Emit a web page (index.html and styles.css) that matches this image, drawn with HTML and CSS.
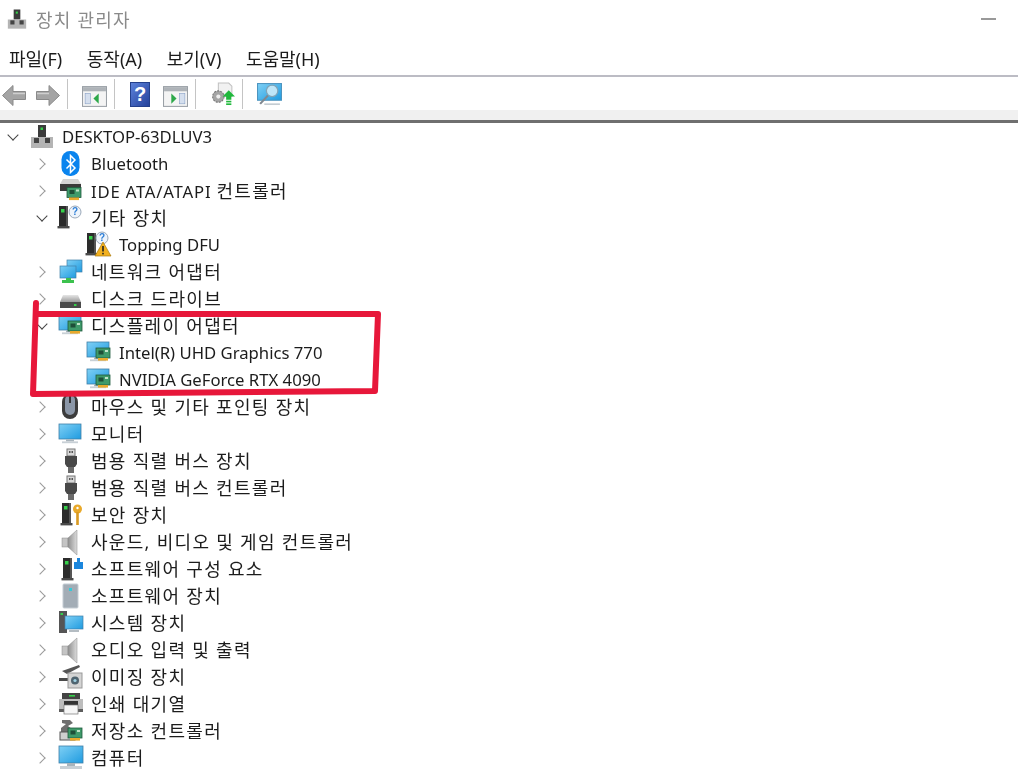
FILE: index.html
```html
<!DOCTYPE html>
<html lang="ko">
<head>
<meta charset="utf-8">
<title>장치 관리자</title>
<link rel="stylesheet" href="styles.css">
</head>
<body>
<svg class="defs" width="0" height="0" aria-hidden="true">
  <defs>
    <linearGradient id="scr" x1="0" y1="0" x2="1" y2="1"><stop offset="0" stop-color="#7fd0f5"/><stop offset="1" stop-color="#1f9be0"/></linearGradient>
    <linearGradient id="metal" x1="0" y1="0" x2="0" y2="1"><stop offset="0" stop-color="#e6e6e6"/><stop offset="1" stop-color="#9a9a9a"/></linearGradient>
    <linearGradient id="cone" x1="0" y1="0" x2="1" y2="0"><stop offset="0" stop-color="#8f8f8f"/><stop offset="1" stop-color="#dcdcdc"/></linearGradient>
    <linearGradient id="help" x1="0" y1="0" x2="1" y2="1"><stop offset="0" stop-color="#5d83dc"/><stop offset="1" stop-color="#23409a"/></linearGradient>
    <g id="pcb"><rect x="0" y="0" width="14" height="10" fill="#3f9a6a" stroke="#1f5a3c" stroke-width=".8"/><rect x="2.5" y="2.5" width="5" height="4" fill="#1e4f38"/><rect x="9" y="2" width="3" height="2" fill="#bfe3c8"/><rect x="2" y="10" width="10" height="2.6" fill="#e8a92c"/></g>
    <g id="tower"><rect x="0" y="0" width="9" height="20" fill="#2c2c2c"/><rect x="7" y="0" width="2" height="20" fill="#555"/><rect x="2" y="3" width="3.5" height="3.5" fill="#35d04a"/><rect x="-1.5" y="20" width="12" height="2.4" fill="#4a4a4a"/></g>
    <g id="bubble"><circle cx="0" cy="0" r="6" fill="#eef4fb" stroke="#9aa8b8"/><text x="0" y="3.4" class="q">?</text></g>
    <g id="mon"><rect x="0" y="0" width="22" height="15" fill="url(#scr)" stroke="#3f7fa8" stroke-width=".8"/><rect x="7" y="15.4" width="8" height="2" fill="#a8b4bc"/><rect x="3" y="17.4" width="16" height="1.8" fill="#c8d0d6"/></g>
    <g id="spk"><rect x="1" y="8" width="6" height="9" fill="#c4c4c4" stroke="#8a8a8a" stroke-width=".5"/><path d="M7 8 16 0v25l-9-8z" fill="url(#cone)" stroke="#888" stroke-width=".5"/></g>
    <g id="plug"><rect x="8" y="0" width="8" height="7" fill="#d8d8d8" stroke="#777"/><rect x="10" y="2" width="1.5" height="2" fill="#555"/><rect x="12.5" y="2" width="1.5" height="2" fill="#555"/><path d="M6 7h12v8l-2 3H8l-2-3z" fill="#484848"/><rect x="9" y="18" width="6" height="6" fill="#6a6a6a"/></g>
    <g id="disp"><use href="#mon" transform="translate(0 1)"/><use href="#pcb" transform="translate(9 7)"/></g>
  </defs>
</svg>

<div class="app">
  <header class="title-bar">
    <svg class="title-ic" viewBox="0 0 24 24"><rect x="8" y="0" width="8" height="12" fill="#3b3b3b"/><rect x="10.5" y="2.5" width="2.5" height="2.5" fill="#35d04a"/><path d="M1 12h22v11H1z" fill="#b4b4b4"/><rect x="4" y="13" width="5" height="5" fill="#444"/><rect x="15" y="13" width="5" height="5" fill="#444"/></svg>
    <span class="title-text">장치 관리자</span>
    <span class="minimize"></span>
  </header>

  <nav class="menu-bar">
    <span>파일(F)</span><span>동작(A)</span><span>보기(V)</span><span>도움말(H)</span>
  </nav>

  <div class="toolbar">
    <div class="tb-group tb-first">
      <svg class="tb-ic tb-arrow" viewBox="0 0 24 24"><path d="M.5 12 11 2v6h12.500v8H11v6z" fill="#a4a4a4" stroke="#8a8a8a"/><path d="M11 10h12" stroke="#cfcfcf" stroke-width="1.500"/></svg>
      <svg class="tb-ic tb-arrow" viewBox="0 0 24 24"><path d="M23.500 12 13 2v6H.5v8H13v6z" fill="#a4a4a4" stroke="#8a8a8a"/><path d="M1 10h12" stroke="#cfcfcf" stroke-width="1.500"/></svg>
    </div>
    <div class="tb-group">
      <svg class="tb-ic tb-low" viewBox="0 0 24 24"><rect x=".5" y="2.500" width="23" height="19" fill="#f4f4f4" stroke="#9aa0a6"/><rect x="1" y="3" width="22" height="4" fill="#aeb3b8"/><rect x="3" y="9" width="5" height="10" fill="#d5dfee" stroke="#8ba3c7" stroke-width=".6"/><path d="M16 9v10l-5-5z" fill="#2ea84a"/></svg>
    </div>
    <div class="tb-group tb-wide">
      <svg class="tb-help" viewBox="0 0 20 25"><rect x=".5" y=".5" width="19" height="24" fill="url(#help)" stroke="#24408c"/><text x="10" y="19" class="help-q">?</text></svg>
      <svg class="tb-ic tb-low" viewBox="0 0 24 24"><rect x=".5" y="2.500" width="23" height="19" fill="#f4f4f4" stroke="#9aa0a6"/><rect x="1" y="3" width="22" height="4" fill="#aeb3b8"/><rect x="16" y="9" width="5" height="10" fill="#d5dfee" stroke="#8ba3c7" stroke-width=".6"/><path d="M8 9v10l5-5z" fill="#2ea84a"/></svg>
    </div>
    <div class="tb-group">
      <svg class="tb-ic" viewBox="0 0 24 24"><path d="M8 1h10l3 3v10H8z" fill="#f1f1f1" stroke="#c2c2c2"/><circle cx="8" cy="14" r="5.500" fill="#a5a5a5" stroke="#777" stroke-dasharray="2 1"/><circle cx="8" cy="14" r="2" fill="#eee"/><path d="M18 8l6 6h-3.500v3h-5v-3H12z" fill="#20b83c"/><rect x="15.500" y="18" width="5" height="1.600" fill="#20b83c"/><rect x="15.500" y="20.500" width="5" height="1.600" fill="#20b83c"/></svg>
    </div>
    <div class="tb-group tb-last">
      <svg class="tb-ic" viewBox="0 0 24 24"><rect x=".5" y="1.500" width="23" height="16" fill="url(#scr)" stroke="#4d94bf"/><rect x="7" y="20.500" width="15" height="1.600" fill="#c4ccd2"/><circle cx="14.500" cy="8.500" r="5.500" fill="#bfe6f8" stroke="#7fa4b8" stroke-width="1.200"/><path d="M10.500 13 3 21" stroke="#808890" stroke-width="2"/></svg>
    </div>
  </div>
  <div class="strip"></div>

  <main class="tree">
    <div class="row d0"><span class="tw down"></span>
      <svg class="ic" viewBox="0 0 24 24"><rect x="8" y="0" width="8" height="12" fill="#3b3b3b"/><rect x="10.500" y="2.500" width="2.500" height="2.500" fill="#35d04a"/><path d="M1 12h22v11H1z" fill="#b4b4b4"/><rect x="4" y="13" width="5" height="5" fill="#444"/><rect x="15" y="13" width="5" height="5" fill="#444"/></svg>
      <span class="label">DESKTOP-63DLUV3</span></div>
    <div class="row d1"><span class="tw"></span>
      <svg class="ic" viewBox="0 0 24 24"><rect x="2.500" y="-1" width="18" height="25" rx="8.500" fill="#0a84ee"/><path d="M7.500 7.500 16 16l-4.500 4.500V3.500L16 8l-8.500 8.500" fill="none" stroke="#fff" stroke-width="1.500"/></svg>
      <span class="label">Bluetooth</span></div>
    <div class="row d1"><span class="tw"></span>
      <svg class="ic" viewBox="0 0 24 24"><path d="M4 0h15l3 5H1z" fill="#d4d4d4"/><rect x="1" y="5" width="21" height="7" fill="#3a3a3a"/><use href="#pcb" transform="translate(8 8.500)"/></svg>
      <span class="label label-wide">IDE ATA/ATAPI <span class="ko">컨트롤러</span></span></div>
    <div class="row d1"><span class="tw down"></span>
      <svg class="ic" viewBox="0 0 24 24"><use href="#tower"/><use href="#bubble" transform="translate(16 6)"/></svg>
      <span class="label ko">기타 장치</span></div>
    <div class="row d2"><span class="tw none"></span>
      <svg class="ic" viewBox="0 0 24 24"><use href="#tower"/><use href="#bubble" transform="translate(15 5)"/><path d="M16 9 24 23H8z" fill="#f2b01e" stroke="#a97a10" stroke-width=".7"/><rect x="15.200" y="13" width="1.600" height="5.500" fill="#222"/><rect x="15.200" y="19.800" width="1.600" height="1.600" fill="#222"/></svg>
      <span class="label">Topping DFU</span></div>
    <div class="row d1"><span class="tw"></span>
      <svg class="ic" viewBox="0 0 24 24"><rect x="8" y="0" width="15" height="12" fill="url(#scr)" stroke="#3f7fa8" stroke-width=".7"/><rect x="1" y="6" width="16" height="12" fill="url(#scr)" stroke="#3f7fa8" stroke-width=".7"/><path d="M7 18h5v2h3v3H3v-3h4z" fill="#3cc24e"/></svg>
      <span class="label ko">네트워크 어댑터</span></div>
    <div class="row d1"><span class="tw"></span>
      <svg class="ic" viewBox="0 0 24 24"><path d="M4 8h15l3 7H1z" fill="url(#metal)"/><rect x="1" y="15" width="21" height="6" fill="#4a4a4a"/><rect x="15" y="17" width="2.500" height="2" fill="#35d04a"/></svg>
      <span class="label ko">디스크 드라이브</span></div>
    <div class="row d1"><span class="tw down"></span><svg class="ic" viewBox="0 0 24 24"><use href="#disp"/></svg><span class="label ko">디스플레이 어댑터</span></div>
    <div class="row d2"><span class="tw none"></span><svg class="ic" viewBox="0 0 24 24"><use href="#disp"/></svg><span class="label">Intel(R) UHD Graphics 770</span></div>
    <div class="row d2"><span class="tw none"></span><svg class="ic" viewBox="0 0 24 24"><use href="#disp"/></svg><span class="label">NVIDIA GeForce RTX 4090</span></div>
    <div class="row d1"><span class="tw"></span>
      <svg class="ic" viewBox="0 0 24 24"><rect x="3" y="-1" width="16" height="25" rx="8" fill="#3c3c3c"/><rect x="6" y="0" width="10" height="20" rx="5" fill="#8b97a8"/><rect x="10" y="0" width="2" height="8" fill="#333"/></svg>
      <span class="label ko">마우스 및 기타 포인팅 장치</span></div>
    <div class="row d1"><span class="tw"></span><svg class="ic" viewBox="0 0 24 24"><use href="#mon" transform="translate(0 2)"/></svg><span class="label ko">모니터</span></div>
    <div class="row d1"><span class="tw"></span><svg class="ic" viewBox="0 0 24 24"><use href="#plug"/></svg><span class="label ko">범용 직렬 버스 장치</span></div>
    <div class="row d1"><span class="tw"></span><svg class="ic" viewBox="0 0 24 24"><use href="#plug"/></svg><span class="label ko">범용 직렬 버스 컨트롤러</span></div>
    <div class="row d1"><span class="tw"></span>
      <svg class="ic" viewBox="0 0 24 24"><use href="#tower" transform="translate(3 0)"/><circle cx="18.500" cy="6" r="4.500" fill="#e9a92a"/><rect x="17.200" y="9" width="2.600" height="13" fill="#d99a22"/><circle cx="18.500" cy="5" r="1.200" fill="#fff"/></svg>
      <span class="label ko">보안 장치</span></div>
    <div class="row d1"><span class="tw"></span><svg class="ic" viewBox="0 0 24 24"><use href="#spk" transform="translate(2 0)"/></svg><span class="label ko">사운드, 비디오 및 게임 컨트롤러</span></div>
    <div class="row d1"><span class="tw"></span>
      <svg class="ic" viewBox="0 0 24 24"><use href="#tower" transform="translate(4 1)"/><path d="M15 5h3V1h3v4h3v7h-9z" fill="#1b86dd"/></svg>
      <span class="label ko">소프트웨어 구성 요소</span></div>
    <div class="row d1"><span class="tw"></span>
      <svg class="ic" viewBox="0 0 24 24"><rect x="4" y="0" width="15" height="24" rx="1" fill="#a3adb6" stroke="#c5cdd4"/><rect x="10" y="4" width="3" height="3" fill="#36c9d8"/></svg>
      <span class="label ko">소프트웨어 장치</span></div>
    <div class="row d1"><span class="tw"></span>
      <svg class="ic" viewBox="0 0 24 24"><rect x="0" y="0" width="8" height="22" fill="#555"/><rect x="1.500" y="2" width="2.500" height="2" fill="#35d04a"/><rect x="6" y="5" width="18" height="13" fill="url(#scr)" stroke="#3f7fa8" stroke-width=".7"/><rect x="10" y="19" width="10" height="2" fill="#b4bcc2"/></svg>
      <span class="label ko">시스템 장치</span></div>
    <div class="row d1"><span class="tw"></span><svg class="ic" viewBox="0 0 24 24"><use href="#spk" transform="translate(2 0)"/></svg><span class="label ko">오디오 입력 및 출력</span></div>
    <div class="row d1"><span class="tw"></span>
      <svg class="ic" viewBox="0 0 24 24"><path d="M3 6 20 0l1 2L8 9z" fill="#555"/><rect x="0" y="13" width="9" height="3" fill="#4a4a4a"/><rect x="9" y="8" width="14" height="15" fill="#d4d4d4" stroke="#999"/><circle cx="16" cy="15.500" r="4" fill="#4f6470"/><circle cx="16" cy="15.500" r="1.600" fill="#9ed0e2"/></svg>
      <span class="label ko">이미징 장치</span></div>
    <div class="row d1"><span class="tw"></span>
      <svg class="ic" viewBox="0 0 24 24"><path d="M3 1h18v6H3z" fill="#444"/><rect x="10" y="3" width="6" height="1.600" fill="#35d04a"/><rect x="0" y="7" width="24" height="10" fill="#bdbdbd"/><rect x="5" y="9" width="14" height="4" fill="#333"/><rect x="0" y="17" width="24" height="3" fill="#5d5d5d"/><rect x="5" y="13" width="14" height="9" fill="#f6f6f6" stroke="#777" stroke-width=".7"/></svg>
      <span class="label ko">인쇄 대기열</span></div>
    <div class="row d1"><span class="tw"></span>
      <svg class="ic" viewBox="0 0 24 24"><path d="M3 1h8l3 3-5 3 4 3v3H2V9l5-4-4-1z" fill="#6f6f6f"/><rect x="1" y="13" width="15" height="8" fill="#cfcfcf" stroke="#555"/><use href="#pcb" transform="translate(9 9)"/></svg>
      <span class="label ko">저장소 컨트롤러</span></div>
    <div class="row d1"><span class="tw"></span>
      <svg class="ic" viewBox="0 0 24 24"><rect x="0" y="0" width="24" height="17" fill="url(#scr)" stroke="#3f7fa8" stroke-width=".8"/><rect x="8" y="17" width="8" height="3" fill="#a8b4bc"/><rect x="1" y="20" width="22" height="3" fill="#c8d0d6"/></svg>
      <span class="label ko">컴퓨터</span></div>

    <svg class="mark" viewBox="0 0 1018 774"><path d="M36 303 33 394 375 391 378 314 36 314" fill="none" stroke="#e7173a" stroke-width="6" stroke-linejoin="round" stroke-linecap="round"/></svg>
  </main>
</div>
</body>
</html>
```

FILE: styles.css
```css
* { box-sizing: border-box; }
html, body { margin: 0; padding: 0; }
body {
  width: 1018px;
  height: 774px;
  overflow: hidden;
  background: #fff;
  color: #1c1c1c;
  font-family: "Noto Sans", "Noto Sans CJK KR", sans-serif;
  font-size: 16.7px;
}
.defs { position: absolute; }
.app { display: flex; flex-direction: column; height: 774px; filter: blur(.35px); }

.title-bar { display: flex; align-items: center; height: 38px; padding-left: 7px; }
.title-ic { width: 20px; height: 25px; margin-right: 9px; }
.title-text { color: #8a8a8a; font-size: 18px; letter-spacing: 1.2px; }
.minimize { width: 15px; height: 2px; margin-left: auto; margin-right: 22px; background: #999; }

.menu-bar { display: flex; align-items: center; gap: 24.5px; height: 37px; padding: 3px 0 0 9px; font-size: 18px; }

.toolbar {
  display: flex;
  align-items: center;
  height: 35px;
  border-top: 2px solid #bcbcc4;
}
.tb-group { display: flex; align-items: center; gap: 13px; height: 30px; padding: 0 7px 0 14px; border-right: 1px solid #c4c4c4; }
.tb-first { padding-left: 2px; gap: 10px; width: 68px; }
.tb-wide { padding-left: 15px; }
.tb-last { border-right: 0; }
.tb-ic { width: 25px; height: 25px; display: block; margin-top: 2px; }
.tb-arrow { margin-top: 4px; }
.tb-low { margin-top: 5px; }
.tb-help { width: 20px; height: 25px; display: block; margin-top: 2px; }
.help-q { font: 700 20px "Liberation Sans", sans-serif; fill: #fff; text-anchor: middle; }

.strip { height: 13px; background: #f0f0f0; border-bottom: 3px solid #6f6f6f; }

.tree { position: relative; flex: 1; }
.row { display: flex; align-items: center; height: 27px; white-space: nowrap; }
.d0 { padding-left: 6px; }
.d1 { padding-left: 35px; }
.d2 { padding-left: 63px; }
.tw { position: relative; flex: none; width: 14px; height: 14px; }
.tw::before {
  content: "";
  position: absolute;
  left: 1px;
  top: 3px;
  width: 7px;
  height: 7px;
  border-top: 1.5px solid #9a9a9a;
  border-right: 1.5px solid #9a9a9a;
  transform: rotate(45deg);
}
.tw.down::before { left: 3px; top: 1px; border-color: #444; transform: rotate(135deg); }
.tw.none::before { display: none; }
.ic { flex: none; width: 24px; height: 24px; margin-left: 10px; overflow: visible; }
.label { margin-left: 8px; }
.label-wide { letter-spacing: .8px; margin-top: -2px; }
.ko { font-size: 18px; letter-spacing: 1.3px; }
.label.ko { margin-top: -2px; }
.q { font: 700 10px "Liberation Sans", sans-serif; fill: #2f7fd6; text-anchor: middle; }
.mark { position: absolute; left: 0; top: -123px; width: 1018px; height: 774px; pointer-events: none; }
```
